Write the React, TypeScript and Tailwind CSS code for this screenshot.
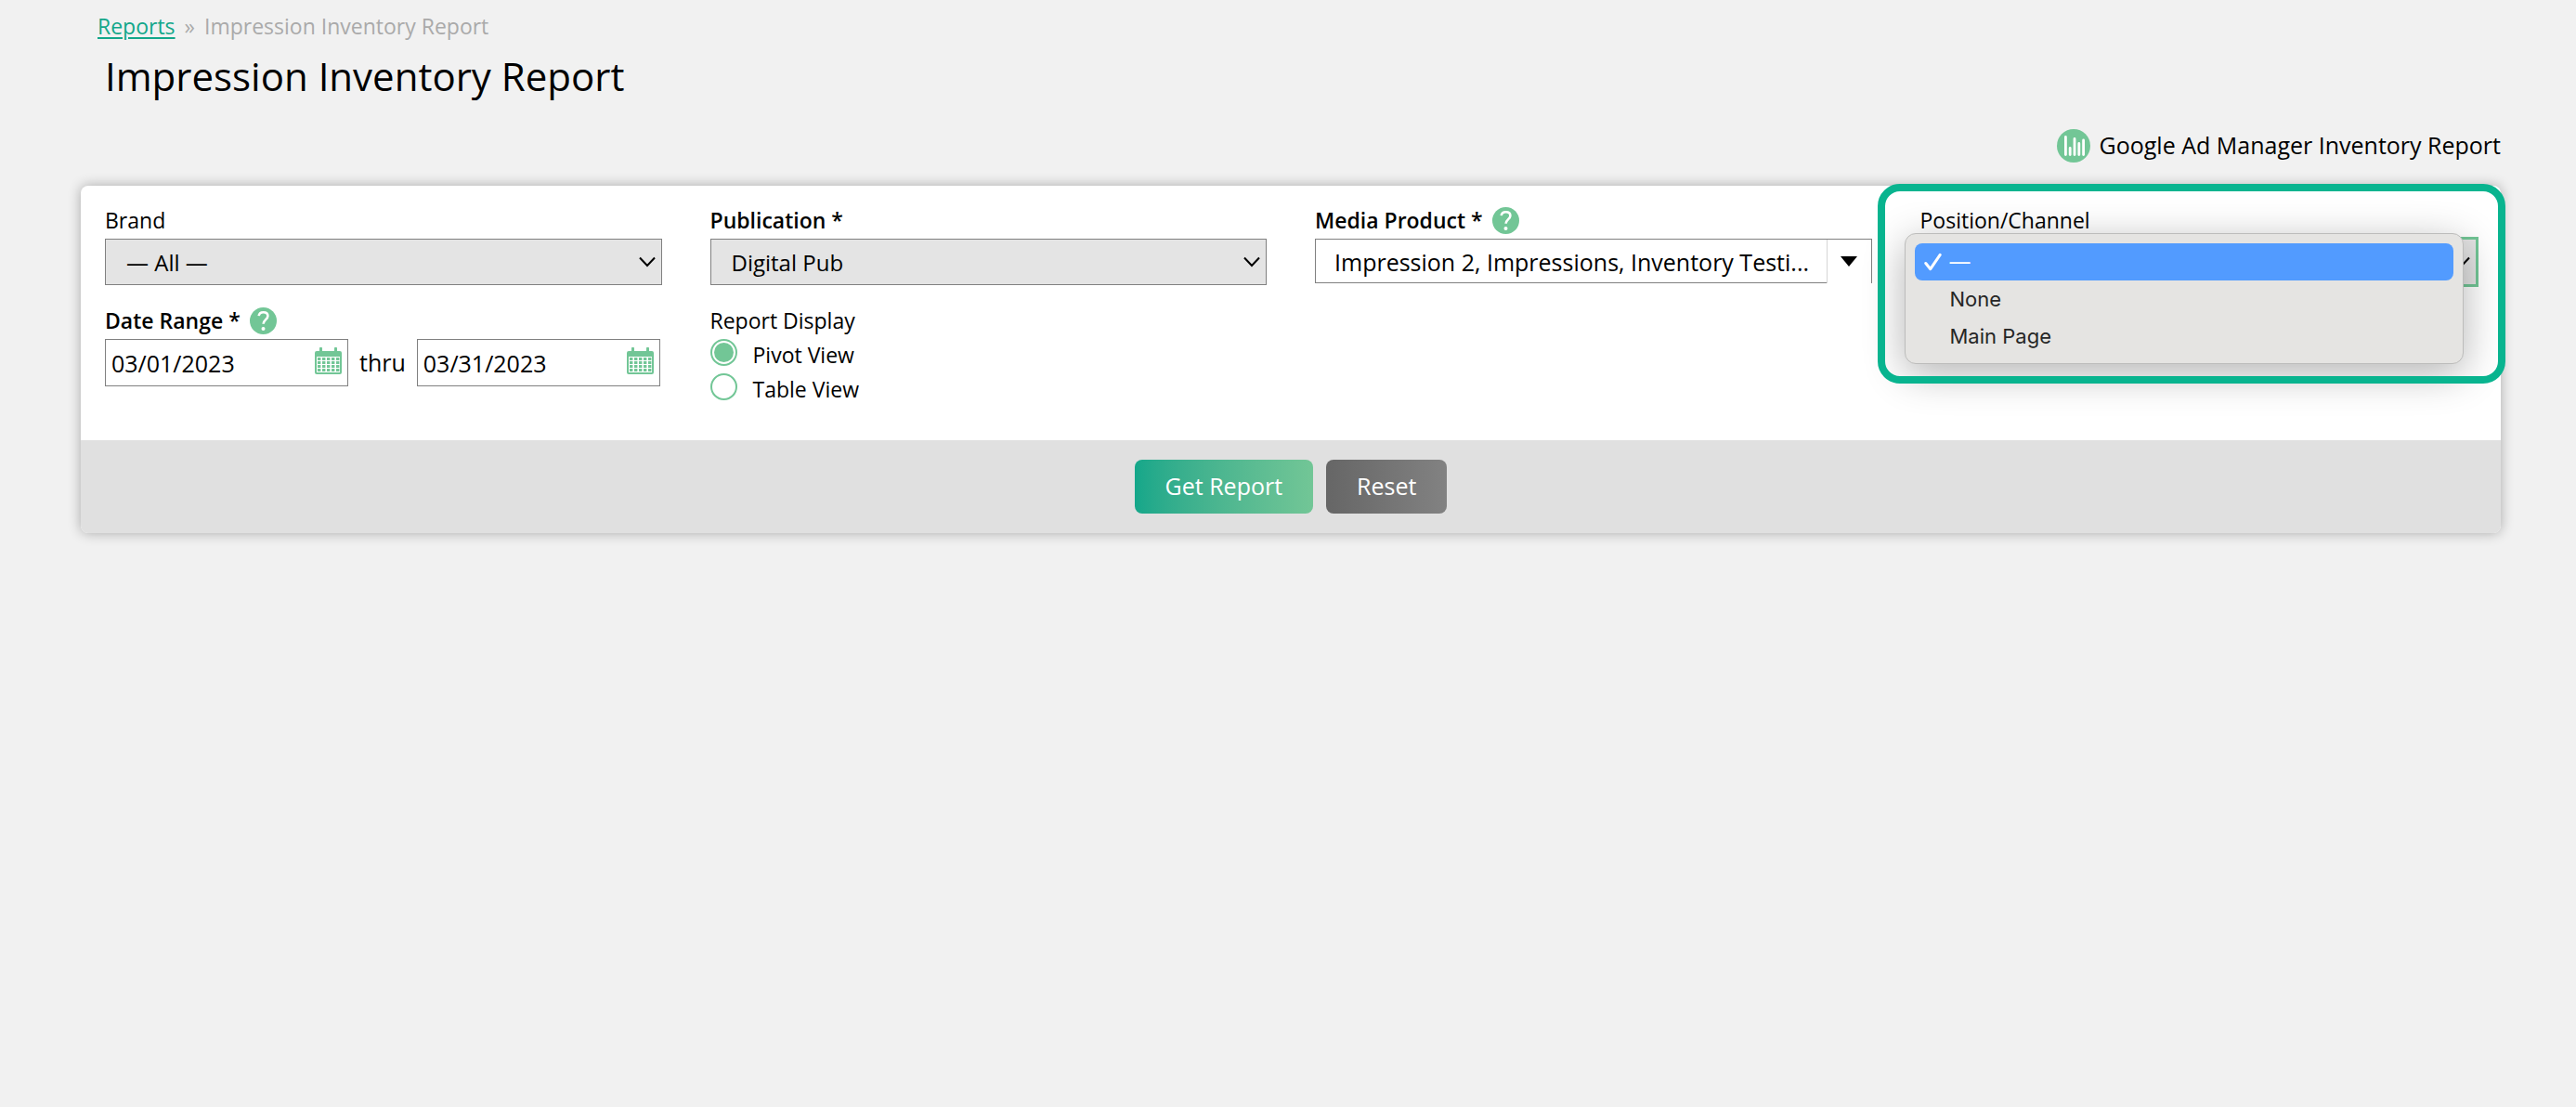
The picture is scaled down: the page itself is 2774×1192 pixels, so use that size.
import { ChangeEvent, ReactNode, useState } from "react";

interface Filters {
  brand: string;
  publication: string;
  position: string;
  startDate: string;
  endDate: string;
  display: string;
}

const POSITIONS = ["—", "None", "Main Page"];

const DEFAULTS: Filters = {
  brand: "— All —",
  publication: "Digital Pub",
  position: "—",
  startDate: "03/01/2023",
  endDate: "03/31/2023",
  display: "pivot",
};

function CalendarIcon() {
  return (
    <svg viewBox="0 0 29 29" className="w-[29px] h-[29px]" aria-hidden="true">
      <path
        fill="#72c696"
        d="M5 1.2a1.5 1.5 0 0 1 3 0V4h13V1.2a1.5 1.5 0 0 1 3 0V4h3a2 2 0 0 1 2 2v21a2 2 0 0 1-2 2H2a2 2 0 0 1-2-2V6a2 2 0 0 1 2-2h3z"
      />
      <path fill="#fff" d="M2 10h25v17H2z" />
      {[11, 15, 19, 23].map((y) =>
        [3, 8, 13, 18, 23].map((x) => (
          <rect key={`${x}-${y}`} x={x} y={y} width="3.4" height="3" fill="#72c696" />
        ))
      )}
    </svg>
  );
}

function HelpButton({ label }: { label: string }) {
  return (
    <button type="button" aria-label={label} className="ml-2.5 cursor-pointer">
      <svg viewBox="0 0 29 29" className="w-[29px] h-[29px]" aria-hidden="true">
        <circle cx="14.5" cy="14.5" r="14.5" fill="#72c696" />
        <path
          d="M9.7 9.2c.3-2.7 2.2-4 4.9-4 2.8 0 4.8 1.5 4.8 4 0 3.9-4.8 4-4.8 8.6"
          fill="none"
          stroke="#fff"
          strokeWidth="2.6"
        />
        <circle cx="14.5" cy="23" r="2" fill="#fff" />
      </svg>
    </button>
  );
}

function Chevron() {
  return (
    <svg
      viewBox="0 0 18 12"
      className="absolute right-[7px] top-[19px] w-[18px] h-3 pointer-events-none"
      aria-hidden="true"
    >
      <path d="M1 1.5l8 8.5 8-8.5" fill="none" stroke="#000" strokeWidth="2" />
    </svg>
  );
}

interface FieldProps {
  label: string;
  htmlFor: string;
  required?: boolean;
  help?: boolean;
  children: ReactNode;
}

function Field({ label, htmlFor, required, help, children }: FieldProps) {
  return (
    <div>
      <div className="flex items-center h-9 mb-0.5">
        <label htmlFor={htmlFor} className={required ? "font-semibold" : ""}>
          {label}
          {required && " *"}
        </label>
        {help && <HelpButton label={`Help for ${label}`} />}
      </div>
      {children}
    </div>
  );
}

const selectClass =
  "block w-full h-[50px] pt-0.5 pl-[22px] pr-8 text-[24px] appearance-none bg-[#e4e4e4] border border-[#808080]";

export default function ImpressionInventoryReport() {
  const [filters, setFilters] = useState<Filters>(DEFAULTS);
  const [menuOpen, setMenuOpen] = useState<boolean>(true);

  const handleChange = (e: ChangeEvent<HTMLInputElement | HTMLSelectElement>) => {
    const { name, value } = e.target;
    setFilters((prev) => ({ ...prev, [name]: value }));
  };

  const pickPosition = (position: string) => {
    setFilters((prev) => ({ ...prev, position }));
    setMenuOpen(false);
  };

  return (
    <div className="min-h-screen bg-[#f1f1f1] text-black text-[23px] font-['Open_Sans',sans-serif] pt-2.5 pl-[87px] pr-[81px]">
      {/* Breadcrumb */}
      <nav className="flex gap-2.5 pl-[18px] leading-9 text-[#aaa]">
        <a href="#reports" className="text-[#13a78a] underline underline-offset-3">
          Reports
        </a>
        <span>»</span>
        <span>Impression Inventory Report</span>
      </nav>
      <h1 className="mt-2 pl-[26px] text-[42px] leading-14">Impression Inventory Report</h1>

      <div className="flex justify-end mt-[29px] mb-[25px]">
        <a href="#gam" className="flex items-center gap-2.5 h-9 text-[25px]">
          <svg viewBox="0 0 36 36" className="size-9" aria-hidden="true">
            <circle cx="18" cy="18" r="18" fill="#72c696" />
            <path
              d="M9.4 8.5v19M14.2 20.5v7M19 10.5v17M23.8 15.5v12M28.6 12v15.5"
              stroke="#fff"
              strokeWidth="2.8"
              strokeLinecap="round"
            />
          </svg>
          Google Ad Manager Inventory Report
        </a>
      </div>

      {/* Filter card */}
      <form
        onSubmit={(e) => e.preventDefault()}
        className="rounded-lg bg-white shadow-[0_0_14px_rgba(0,0,0,0.3)]"
      >
        <div className="grid grid-cols-4 min-h-[274px]">
          <div className="flex flex-col gap-5 px-[26px] pt-[19px]">
            <Field label="Brand" htmlFor="brand">
              <div className="relative">
                <select
                  id="brand"
                  name="brand"
                  value={filters.brand}
                  onChange={handleChange}
                  className={selectClass}
                >
                  <option>— All —</option>
                </select>
                <Chevron />
              </div>
            </Field>
            <Field label="Date Range" htmlFor="startDate" required help>
              <div className="flex items-center gap-3 text-[25px]">
                <div className="relative">
                  <input
                    type="text"
                    id="startDate"
                    name="startDate"
                    value={filters.startDate}
                    onChange={handleChange}
                    className="block w-[262px] h-[51px] pl-1.5 pr-10 border border-[#808080] bg-white"
                  />
                  <button type="button" aria-label="Pick start date" className="absolute right-[7px] top-[9px]">
                    <CalendarIcon />
                  </button>
                </div>
                <label htmlFor="endDate">thru</label>
                <div className="relative">
                  <input
                    type="text"
                    id="endDate"
                    name="endDate"
                    value={filters.endDate}
                    onChange={handleChange}
                    className="block w-[262px] h-[51px] pl-1.5 pr-10 border border-[#808080] bg-white"
                  />
                  <button type="button" aria-label="Pick end date" className="absolute right-[7px] top-[9px]">
                    <CalendarIcon />
                  </button>
                </div>
              </div>
            </Field>
          </div>

          <div className="flex flex-col gap-5 px-[26px] pt-[19px]">
            <Field label="Publication" htmlFor="publication" required>
              <div className="relative">
                <select
                  id="publication"
                  name="publication"
                  value={filters.publication}
                  onChange={handleChange}
                  className={selectClass}
                >
                  <option>Digital Pub</option>
                </select>
                <Chevron />
              </div>
            </Field>
            <Field label="Report Display" htmlFor="pivot">
              <div className="flex flex-col gap-[3px]">
                {[
                  { id: "pivot", text: "Pivot View" },
                  { id: "table", text: "Table View" },
                ].map((view) => (
                  <label key={view.id} htmlFor={view.id} className="flex items-start gap-[17px] leading-[34px]">
                    <input
                      type="radio"
                      id={view.id}
                      name="display"
                      value={view.id}
                      checked={filters.display === view.id}
                      onChange={handleChange}
                      className="appearance-none size-[29px] rounded-full border-2 border-[#72c696] bg-white bg-clip-content p-0.5 checked:bg-[#72c696]"
                    />
                    {view.text}
                  </label>
                ))}
              </div>
            </Field>
          </div>

          <div className="px-[26px] pt-[19px]">
            <Field label="Media Product" htmlFor="media" required help>
              <button
                type="button"
                id="media"
                className="flex w-full h-12 my-px text-[25px] text-left border-t border-x border-[#808080]"
              >
                <span className="flex-1 h-full pl-5 leading-[48px] border-b border-[#808080] truncate">
                  Impression 2, Impressions, Inventory Testi...
                </span>
                <span className="flex w-12 h-full items-center justify-center border-l border-[#d5d5d5]">
                  <svg viewBox="0 0 18 11" className="w-[18px] h-[11px]" aria-hidden="true">
                    <path d="M0 0h18l-9 11z" />
                  </svg>
                </span>
              </button>
            </Field>
          </div>

          <div className="relative px-[26px] pt-[19px]">
            <Field label="Position/Channel" htmlFor="position">
              <div className="relative">
                <select
                  id="position"
                  name="position"
                  value={filters.position}
                  onChange={handleChange}
                  onMouseDown={() => setMenuOpen(true)}
                  className={`${selectClass} outline-3 -outline-offset-1 outline-[#72c696]`}
                >
                  {POSITIONS.map((position) => (
                    <option key={position}>{position}</option>
                  ))}
                </select>
                <Chevron />
                {menuOpen && (
                  <ul
                    role="listbox"
                    aria-label="Position/Channel"
                    className="absolute -left-[17px] right-3.5 -top-1.5 z-10 p-2.5 pb-[9px] rounded-xl border border-[#bcbcbb] bg-[#e5e4e2] text-[#262626] text-[22px] font-[Inter,sans-serif] shadow-[0_10px_44px_rgba(0,0,0,0.3)]"
                  >
                    {POSITIONS.map((position) => {
                      const selected = position === filters.position;
                      return (
                        <li
                          key={position}
                          role="option"
                          aria-selected={selected}
                          onClick={() => pickPosition(position)}
                          className={`flex items-center h-10 pl-2.5 rounded-lg ${
                            selected ? "bg-[#529bff] text-white" : ""
                          }`}
                        >
                          <span className="w-7">
                            {selected && (
                              <svg viewBox="0 0 20 20" className="size-5" aria-hidden="true">
                                <path
                                  d="M1.8 11.5l5 6.2L17.2 2.4"
                                  fill="none"
                                  stroke="#fff"
                                  strokeWidth="3"
                                  strokeLinecap="round"
                                  strokeLinejoin="round"
                                />
                              </svg>
                            )}
                          </span>
                          {position}
                        </li>
                      );
                    })}
                  </ul>
                )}
              </div>
            </Field>
            {/* Callout ring */}
            <div className="absolute -left-5 -right-[5px] -top-0.5 h-[215px] z-20 rounded-3xl border-8 border-[#08b48f] pointer-events-none" />
          </div>
        </div>

        {/* Actions */}
        <div className="flex justify-center gap-3.5 py-[21px] rounded-b-lg bg-[#e0e0e0] text-[25px] text-white">
          <button
            type="submit"
            className="h-[58px] px-[33px] rounded-lg bg-gradient-to-r from-[#13a78a] to-[#72c696] cursor-pointer"
          >
            Get Report
          </button>
          <button
            type="button"
            onClick={() => setFilters(DEFAULTS)}
            className="h-[58px] px-[33px] rounded-lg bg-gradient-to-r from-[#666] to-[#828282] cursor-pointer"
          >
            Reset
          </button>
        </div>
      </form>
    </div>
  );
}
